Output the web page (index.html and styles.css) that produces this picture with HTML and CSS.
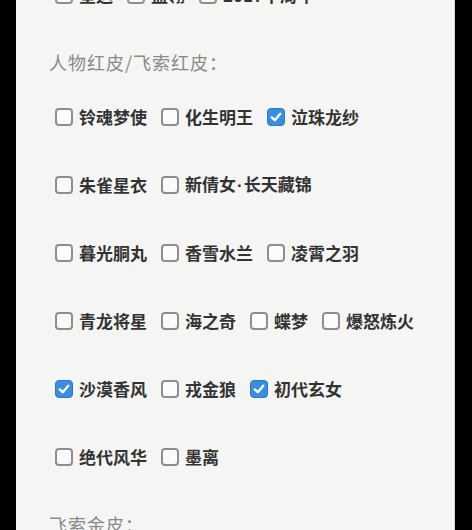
FILE: index.html
```html
<!DOCTYPE html>
<html lang="zh-CN">
<head>
<meta charset="utf-8">
<title>皮肤选择</title>
<link rel="stylesheet" href="styles.css">
</head>
<body>
<div class="panel">
  <div class="row">
    <label class="item"><span class="box"></span><span class="name">星运</span></label>
    <label class="item"><span class="box"></span><span class="name">蓝翎</span></label>
    <label class="item"><span class="box"></span><span class="name">2017十周年</span></label>
  </div>

  <div class="heading">人物红皮/飞索红皮：</div>

  <div class="row">
    <label class="item"><span class="box"></span><span class="name">铃魂梦使</span></label>
    <label class="item"><span class="box"></span><span class="name">化生明王</span></label>
    <label class="item"><span class="box checked"><svg viewBox="0 0 18 18"><path d="M4.2 9.4 L7.6 12.6 L13.8 5.4"/></svg></span><span class="name">泣珠龙纱</span></label>
  </div>
  <div class="row">
    <label class="item"><span class="box"></span><span class="name">朱雀星衣</span></label>
    <label class="item"><span class="box"></span><span class="name">新倩女<span class="dot">·</span>长天藏锦</span></label>
  </div>
  <div class="row">
    <label class="item"><span class="box"></span><span class="name">暮光胴丸</span></label>
    <label class="item"><span class="box"></span><span class="name">香雪水兰</span></label>
    <label class="item"><span class="box"></span><span class="name">凌霄之羽</span></label>
  </div>
  <div class="row">
    <label class="item"><span class="box"></span><span class="name">青龙将星</span></label>
    <label class="item"><span class="box"></span><span class="name">海之奇</span></label>
    <label class="item"><span class="box"></span><span class="name">蝶梦</span></label>
    <label class="item"><span class="box"></span><span class="name">爆怒炼火</span></label>
  </div>
  <div class="row">
    <label class="item"><span class="box checked"><svg viewBox="0 0 18 18"><path d="M4.2 9.4 L7.6 12.6 L13.8 5.4"/></svg></span><span class="name">沙漠香风</span></label>
    <label class="item"><span class="box"></span><span class="name">戎金狼</span></label>
    <label class="item"><span class="box checked"><svg viewBox="0 0 18 18"><path d="M4.2 9.4 L7.6 12.6 L13.8 5.4"/></svg></span><span class="name">初代玄女</span></label>
  </div>
  <div class="row">
    <label class="item"><span class="box"></span><span class="name">绝代风华</span></label>
    <label class="item"><span class="box"></span><span class="name">墨离</span></label>
  </div>

  <div class="heading">飞索金皮：</div>
</div>
</body>
</html>
```

FILE: styles.css
```css
html, body {
  margin: 0;
  padding: 0;
  background: #000;
  height: 530px;
  overflow: hidden;
}

body {
  font-family: "Noto Sans CJK SC", "Noto Sans", sans-serif;
}

.panel {
  margin: -39px 17px 0 16px;
  padding-left: 33px;
  background: #f5f5f3;
  border-right: 1px solid #d8d8d6;
  height: 620px;
}

.row {
  height: 68px;
  display: flex;
  align-items: center;
  gap: 14px;
  padding-left: 6px;
}

.item {
  display: flex;
  align-items: center;
  gap: 6px;
}

.box {
  width: 18px;
  height: 18px;
  box-sizing: border-box;
  border: 2px solid #8e8e8e;
  border-radius: 4px;
  background: #fbfbfb;
  display: flex;
}

.box.checked {
  border: 1px solid #2f78c4;
  background: #3a8ee0;
}

.box svg {
  width: 100%;
  height: 100%;
}

.box svg path {
  fill: none;
  stroke: #fff;
  stroke-width: 2.6;
  stroke-linecap: round;
  stroke-linejoin: round;
}

.name {
  font-size: 17px;
  font-weight: 700;
  color: #333;
  line-height: 20px;
}

.dot {
  font-family: "Liberation Sans", sans-serif;
  padding: 0 1px;
}

.heading {
  margin-top: 12px;
  height: 42px;
  line-height: 42px;
  font-size: 18px;
  letter-spacing: 1px;
  color: #8a8a8a;
}
```
